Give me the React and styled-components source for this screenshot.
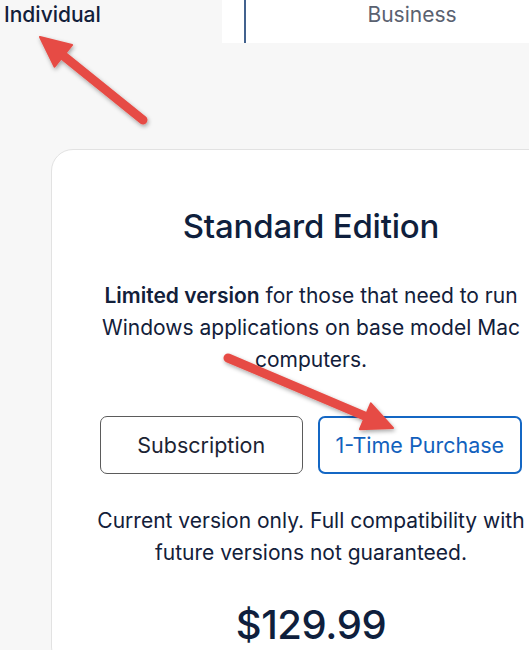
import React from "react";
import styled, { createGlobalStyle } from "styled-components";

const Global = createGlobalStyle`
  html, body { margin: 0; padding: 0; }
  body {
    background: #f7f7f7;
    font-family: Inter, "Open Sans", Arial, sans-serif;
    color: #12203a;
    overflow: hidden;
    width: 529px;
    height: 650px;
  }
`;

const Page = styled.div`
  position: relative;
  width: 529px;
  height: 650px;
  overflow: hidden;
  background: #f7f7f7;
`;

const TabBar = styled.div`
  display: flex;
  height: 43px;
`;

const TabLeft = styled.div`
  width: 222px;
  flex: none;
  padding: 2px 0 0 4px;
  box-sizing: border-box;
  font-size: 21px;
  font-weight: 450;
  color: #12203a;
  line-height: 26px;
`;

const TabRight = styled.div`
  flex: 1;
  background: #fff;
  padding-left: 22px;
  display: flex;
`;

const TabItem = styled.div`
  flex: none;
  width: 332px;
  border-left: 2px solid #43628e;
  text-align: center;
  padding-top: 2px;
  font-size: 21px;
  line-height: 26px;
  color: #5a6170;
`;

const CardWrap = styled.div`
  padding: 106px 0 0 51px;
`;

const Card = styled.div`
  width: 520px;
  box-sizing: border-box;
  background: #fff;
  border: 1px solid #e2e2e2;
  border-radius: 22px;
  padding: 56px 40px 20px;
  display: flex;
  flex-direction: column;
  align-items: center;
  text-align: center;
`;

const Title = styled.h2`
  margin: 0;
  font-size: 33px;
  line-height: 40px;
  font-weight: 500;
  color: #0f1f3d;
  letter-spacing: -0.2px;
`;

const Desc = styled.p`
  margin: ${(p) => p.$mt}px 0 0;
  font-size: 21px;
  line-height: 32px;
  color: #12203a;
  & b { font-weight: 600; }
`;

const Buttons = styled.div`
  margin-top: 40px;
  display: flex;
  gap: 15px;
  width: 422px;
`;

const Btn = styled.button`
  flex: 1;
  height: 58px;
  box-sizing: border-box;
  background: #fff;
  border: ${(p) => (p.$active ? "2px solid #1467c4" : "1px solid #5b5b5b")};
  border-radius: 7px;
  color: ${(p) => (p.$active ? "#1161bd" : "#1b2333")};
  font-family: inherit;
  font-size: 21.5px;
  padding: 0;
`;

const Price = styled.div`
  margin-top: 33px;
  font-size: 40px;
  line-height: 46px;
  font-weight: 500;
  color: #0f1f3d;
  letter-spacing: -0.4px;
`;

const Overlay = styled.svg`
  position: absolute;
  left: 0;
  top: 0;
  pointer-events: none;
`;

function Arrow({ x1, y1, x2, y2 }) {
  const dx = x2 - x1;
  const dy = y2 - y1;
  const len = Math.hypot(dx, dy);
  const ux = dx / len;
  const uy = dy / len;
  const headLen = 30;
  const headW = 14;
  const bx = x2 - ux * headLen;
  const by = y2 - uy * headLen;
  const px = -uy;
  const py = ux;
  const pts = `${x2},${y2} ${bx + px * headW},${by + py * headW} ${bx - px * headW},${by - py * headW}`;
  return (
    <g filter="url(#sh)">
      <line x1={x1} y1={y1} x2={bx + ux * 4} y2={by + uy * 4} stroke="#e64c45" strokeWidth="9" strokeLinecap="round" />
      <polygon points={pts} fill="#e64c45" stroke="#e64c45" strokeWidth="2" strokeLinejoin="round" />
    </g>
  );
}

export default function App() {
  return (
    <Page>
      <Global />
      <TabBar>
        <TabLeft>Individual</TabLeft>
        <TabRight>
          <TabItem>Business</TabItem>
        </TabRight>
      </TabBar>
      <CardWrap>
        <Card>
          <Title>Standard Edition</Title>
          <Desc $mt={34}>
            <b>Limited version</b> for those that need to run Windows applications on base model Mac computers.
          </Desc>
          <Buttons>
            <Btn>Subscription</Btn>
            <Btn $active>1-Time Purchase</Btn>
          </Buttons>
          <Desc $mt={31}>Current version only. Full compatibility with future versions not guaranteed.</Desc>
          <Price>$129.99</Price>
        </Card>
      </CardWrap>
      <Overlay width="529" height="650" viewBox="0 0 529 650">
        <defs>
          <filter id="sh" x="-20%" y="-20%" width="140%" height="140%">
            <feDropShadow dx="1" dy="2" stdDeviation="2" floodColor="#000" floodOpacity="0.35" />
          </filter>
        </defs>
        <Arrow x1={143} y1={120} x2={40} y2={37} />
        <Arrow x1={228} y1={358} x2={393} y2={428} />
      </Overlay>
    </Page>
  );
}
